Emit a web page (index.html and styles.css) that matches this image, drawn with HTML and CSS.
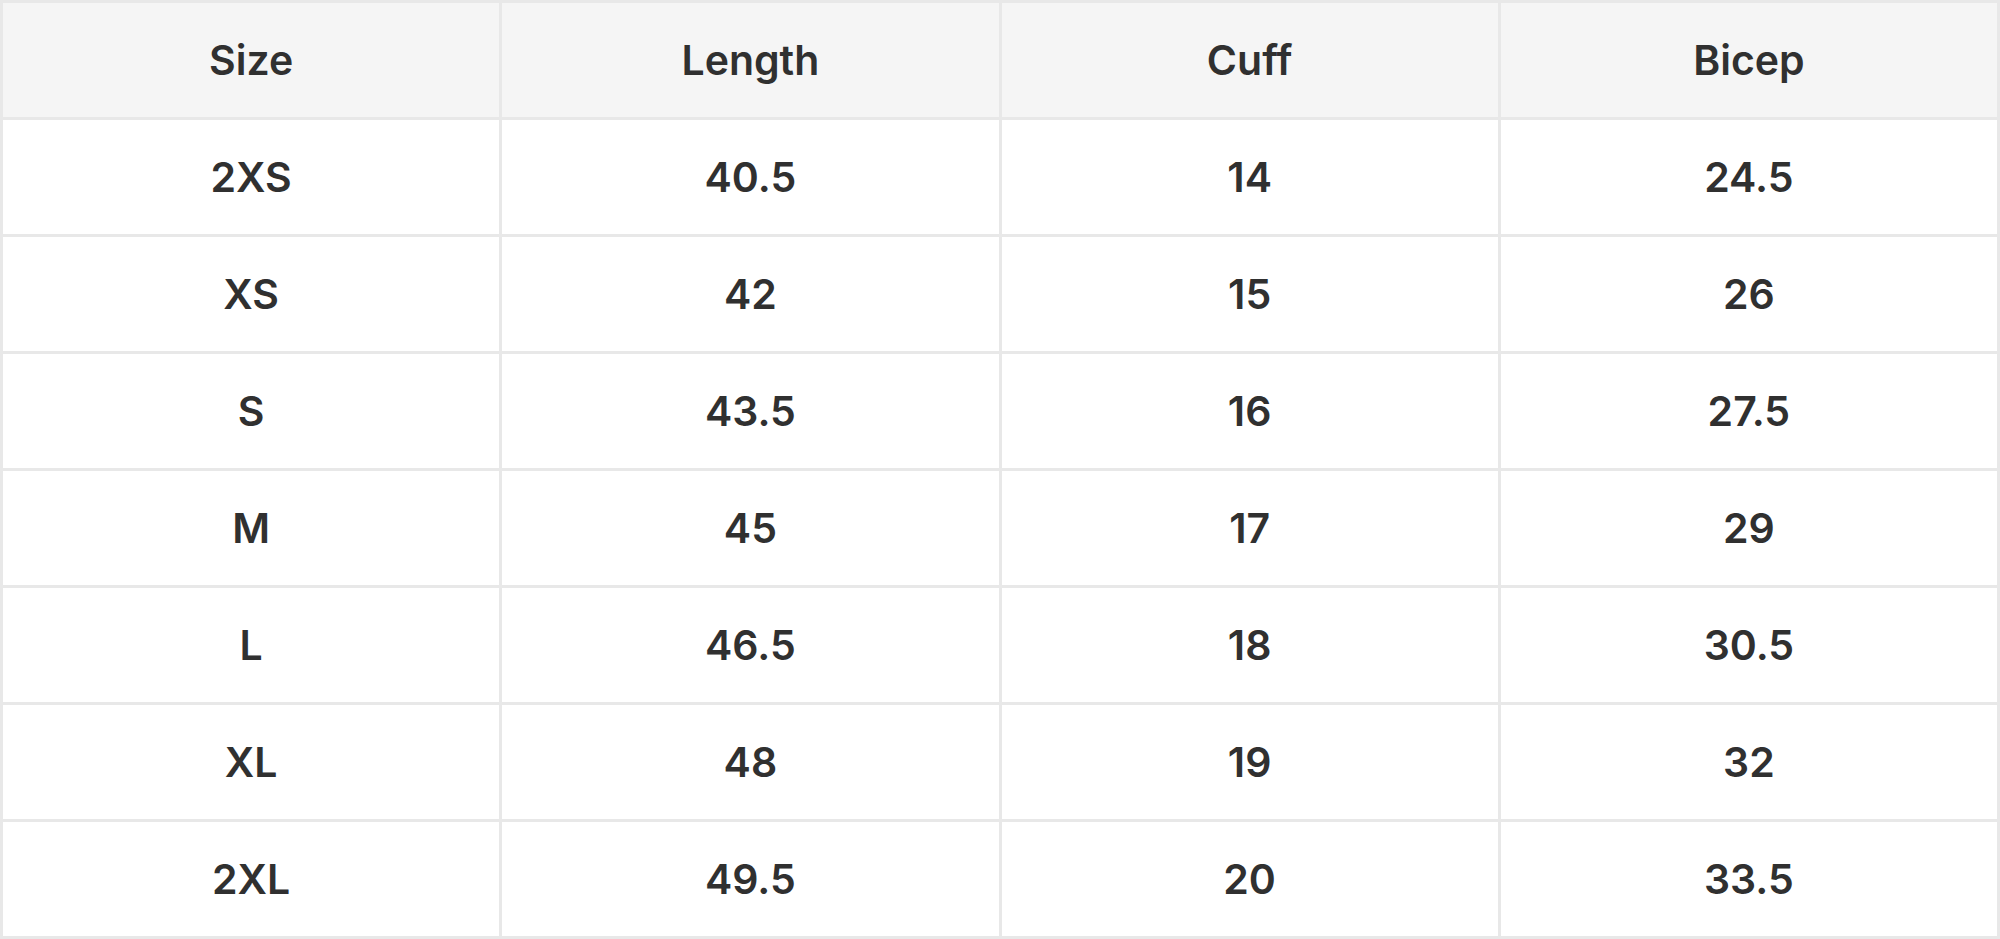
FILE: index.html
```html
<!DOCTYPE html>
<html>
<head>
<meta charset="utf-8">
<link rel="stylesheet" href="styles.css">
</head>
<body>
<table class="size-table">
  <thead>
    <tr><th>Size</th><th>Length</th><th>Cuff</th><th>Bicep</th></tr>
  </thead>
  <tbody>
    <tr><td>2XS</td><td>40.5</td><td>14</td><td>24.5</td></tr>
    <tr><td>XS</td><td>42</td><td>15</td><td>26</td></tr>
    <tr><td>S</td><td>43.5</td><td>16</td><td>27.5</td></tr>
    <tr><td>M</td><td>45</td><td>17</td><td>29</td></tr>
    <tr><td>L</td><td>46.5</td><td>18</td><td>30.5</td></tr>
    <tr><td>XL</td><td>48</td><td>19</td><td>32</td></tr>
    <tr><td>2XL</td><td>49.5</td><td>20</td><td>33.5</td></tr>
  </tbody>
</table>
</body>
</html>
```
FILE: styles.css
```css
html, body {
  margin: 0;
  padding: 0;
  background: #ffffff;
}
.size-table {
  width: 2000px;
  height: 939px;
  border-collapse: collapse;
  table-layout: fixed;
  font-family: Inter, "Noto Sans", sans-serif;
  font-weight: 600;
  font-size: 41px;
  color: #303030;
}
.size-table th,
.size-table td {
  border: 3px solid #e8e8e8;
  text-align: center;
  vertical-align: middle;
  padding: 0;
  height: 114px;
}
.size-table th {
  background: #f5f5f5;
  font-weight: 600;
}
```
